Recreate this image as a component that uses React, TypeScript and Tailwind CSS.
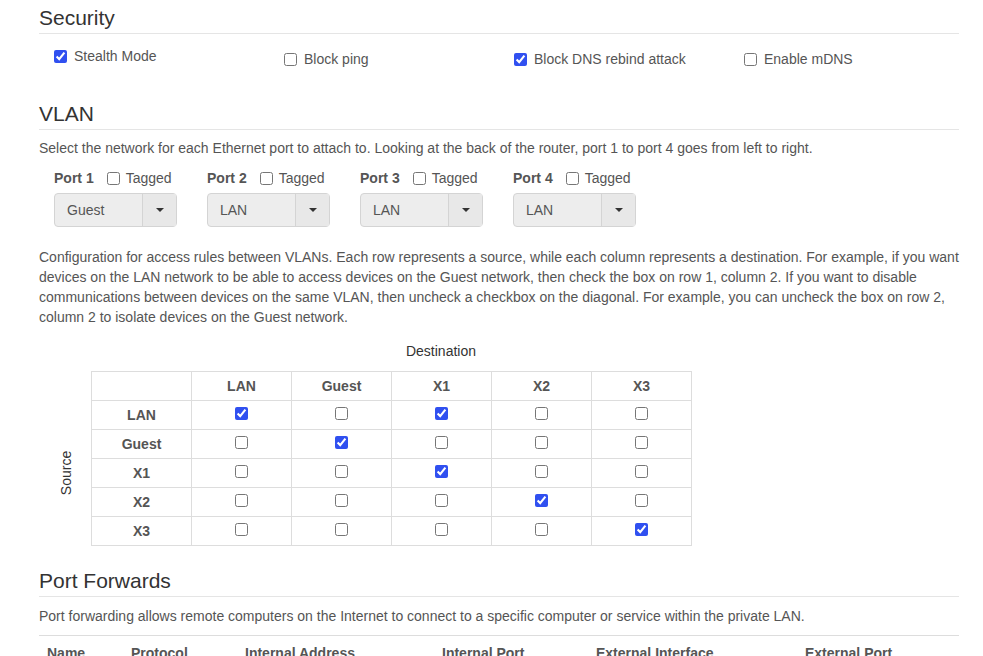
import React from 'react';

const font = { fontFamily: '"Liberation Sans", Arial, sans-serif' };

const nets = ['LAN', 'Guest', 'X1', 'X2', 'X3'];

// rows = source, cols = destination
const rules = [
  [true, false, true, false, false],
  [false, true, false, false, false],
  [false, false, true, false, false],
  [false, false, false, true, false],
  [false, false, false, false, true],
];

const ports = [
  { name: 'Port 1', value: 'Guest' },
  { name: 'Port 2', value: 'LAN' },
  { name: 'Port 3', value: 'LAN' },
  { name: 'Port 4', value: 'LAN' },
];

function Check({ checked }: { checked?: boolean }) {
  return (
    <input
      type="checkbox"
      defaultChecked={checked}
      className="m-0 h-[13px] w-[13px] accent-[#3050f0]"
    />
  );
}

function Heading({ children }: { children: React.ReactNode }) {
  return (
    <h3 className="border-b border-[#e5e5e5] pb-[3px] text-[21px] leading-[24px] font-normal text-[#333]">
      {children}
    </h3>
  );
}

function Select({ value }: { value: string }) {
  return (
    <div className="flex h-[34px] w-[123px] rounded-[4px] border border-[#d4d4d4] bg-[#ededed] text-[14px] text-[#555]">
      <div className="flex flex-1 items-center pl-[12px]">{value}</div>
      <div className="flex w-[34px] items-center justify-center border-l border-[#d4d4d4] bg-[#e8e8e8]">
        <span className="h-0 w-0 border-x-[4px] border-t-[4px] border-x-transparent border-t-[#333]" />
      </div>
    </div>
  );
}

export default function App() {
  return (
    <div style={font} className="min-h-[656px] bg-white text-[14px] leading-[20px] text-[#555]">
      <div className="ml-[39px] w-[920px] pt-[6px]">
        <Heading>Security</Heading>
        <div className="mt-[12px] grid h-[23px] grid-cols-4">
          {[
            { label: 'Stealth Mode', on: true, up: true },
            { label: 'Block ping', on: false },
            { label: 'Block DNS rebind attack', on: true },
            { label: 'Enable mDNS', on: false },
          ].map((o) => (
            <label
              key={o.label}
              className={`flex items-center gap-[7px] self-start pl-[15px] ${o.up ? '' : 'mt-[3px]'}`}
            >
              <Check checked={o.on} />
              <span>{o.label}</span>
            </label>
          ))}
        </div>

        <div className="mt-[33px]">
          <Heading>VLAN</Heading>
        </div>
        <p className="mt-[8px]">
          Select the network for each Ethernet port to attach to. Looking at the back of the router, port 1 to port 4 goes
          from left to right.
        </p>
        <div className="mt-[10px] flex gap-[30px] pl-[15px]">
          {ports.map((p) => (
            <div key={p.name} className="w-[123px]">
              <div className="flex items-center">
                <span className="font-bold">{p.name}</span>
                <span className="ml-[13px] flex items-center">
                  <Check />
                </span>
                <span className="ml-[6px]">Tagged</span>
              </div>
              <div className="mt-[5px]">
                <Select value={p.value} />
              </div>
            </div>
          ))}
        </div>

        <p className="mt-[20px]">
          Configuration for access rules between VLANs. Each row represents a source, while each column represents a
          destination. For example, if you want devices on the LAN network to be able to access devices on the Guest
          network, then check the box on row 1, column 2. If you want to disable communications between devices on the
          same VLAN, then uncheck a checkbox on the diagonal. For example, you can uncheck the box on row 2, column 2 to
          isolate devices on the Guest network.
        </p>

        <div className="mt-[14px] flex">
          <div className="w-[152px]" />
          <div className="w-[500px] text-center text-[#333]">Destination</div>
        </div>

        <div className="mt-[10px] flex">
          <div className="flex w-[52px] flex-col pt-[29px]">
            <div className="flex flex-1 items-center justify-center pl-[3px]">
              <span className="-rotate-90 text-[#333]">Source</span>
            </div>
          </div>
          <table className="border-collapse">
            <thead>
              <tr>
                <th className="h-[29px] w-[100px] border border-[#ddd]" />
                {nets.map((n) => (
                  <th key={n} className="h-[29px] w-[100px] border border-[#ddd] text-center font-bold">
                    {n}
                  </th>
                ))}
              </tr>
            </thead>
            <tbody>
              {nets.map((src, i) => (
                <tr key={src}>
                  <th className="h-[29px] border border-[#ddd] text-center font-bold">{src}</th>
                  {rules[i].map((on, j) => (
                    <td key={j} className="h-[29px] border border-[#ddd] p-0 text-center">
                      <div className="flex items-center justify-center pb-[3px]">
                        <Check checked={on} />
                      </div>
                    </td>
                  ))}
                </tr>
              ))}
            </tbody>
          </table>
        </div>

        <div className="mt-[23px]">
          <Heading>Port Forwards</Heading>
        </div>
        <p className="mt-[9px]">
          Port forwarding allows remote computers on the Internet to connect to a specific computer or service within the
          private LAN.
        </p>
        <table className="mt-[9px] w-full border-collapse text-left">
          <thead>
            <tr className="border-t border-[#ddd]">
              <th className="w-[84px] px-[8px] pt-[7px] font-bold">Name</th>
              <th className="w-[114px] px-[8px] pt-[7px] font-bold">Protocol</th>
              <th className="w-[197px] px-[8px] pt-[7px] font-bold">Internal Address</th>
              <th className="w-[154px] px-[8px] pt-[7px] font-bold">Internal Port</th>
              <th className="w-[209px] px-[8px] pt-[7px] font-bold">External Interface</th>
              <th className="px-[8px] pt-[7px] font-bold">External Port</th>
            </tr>
          </thead>
        </table>
      </div>
    </div>
  );
}
